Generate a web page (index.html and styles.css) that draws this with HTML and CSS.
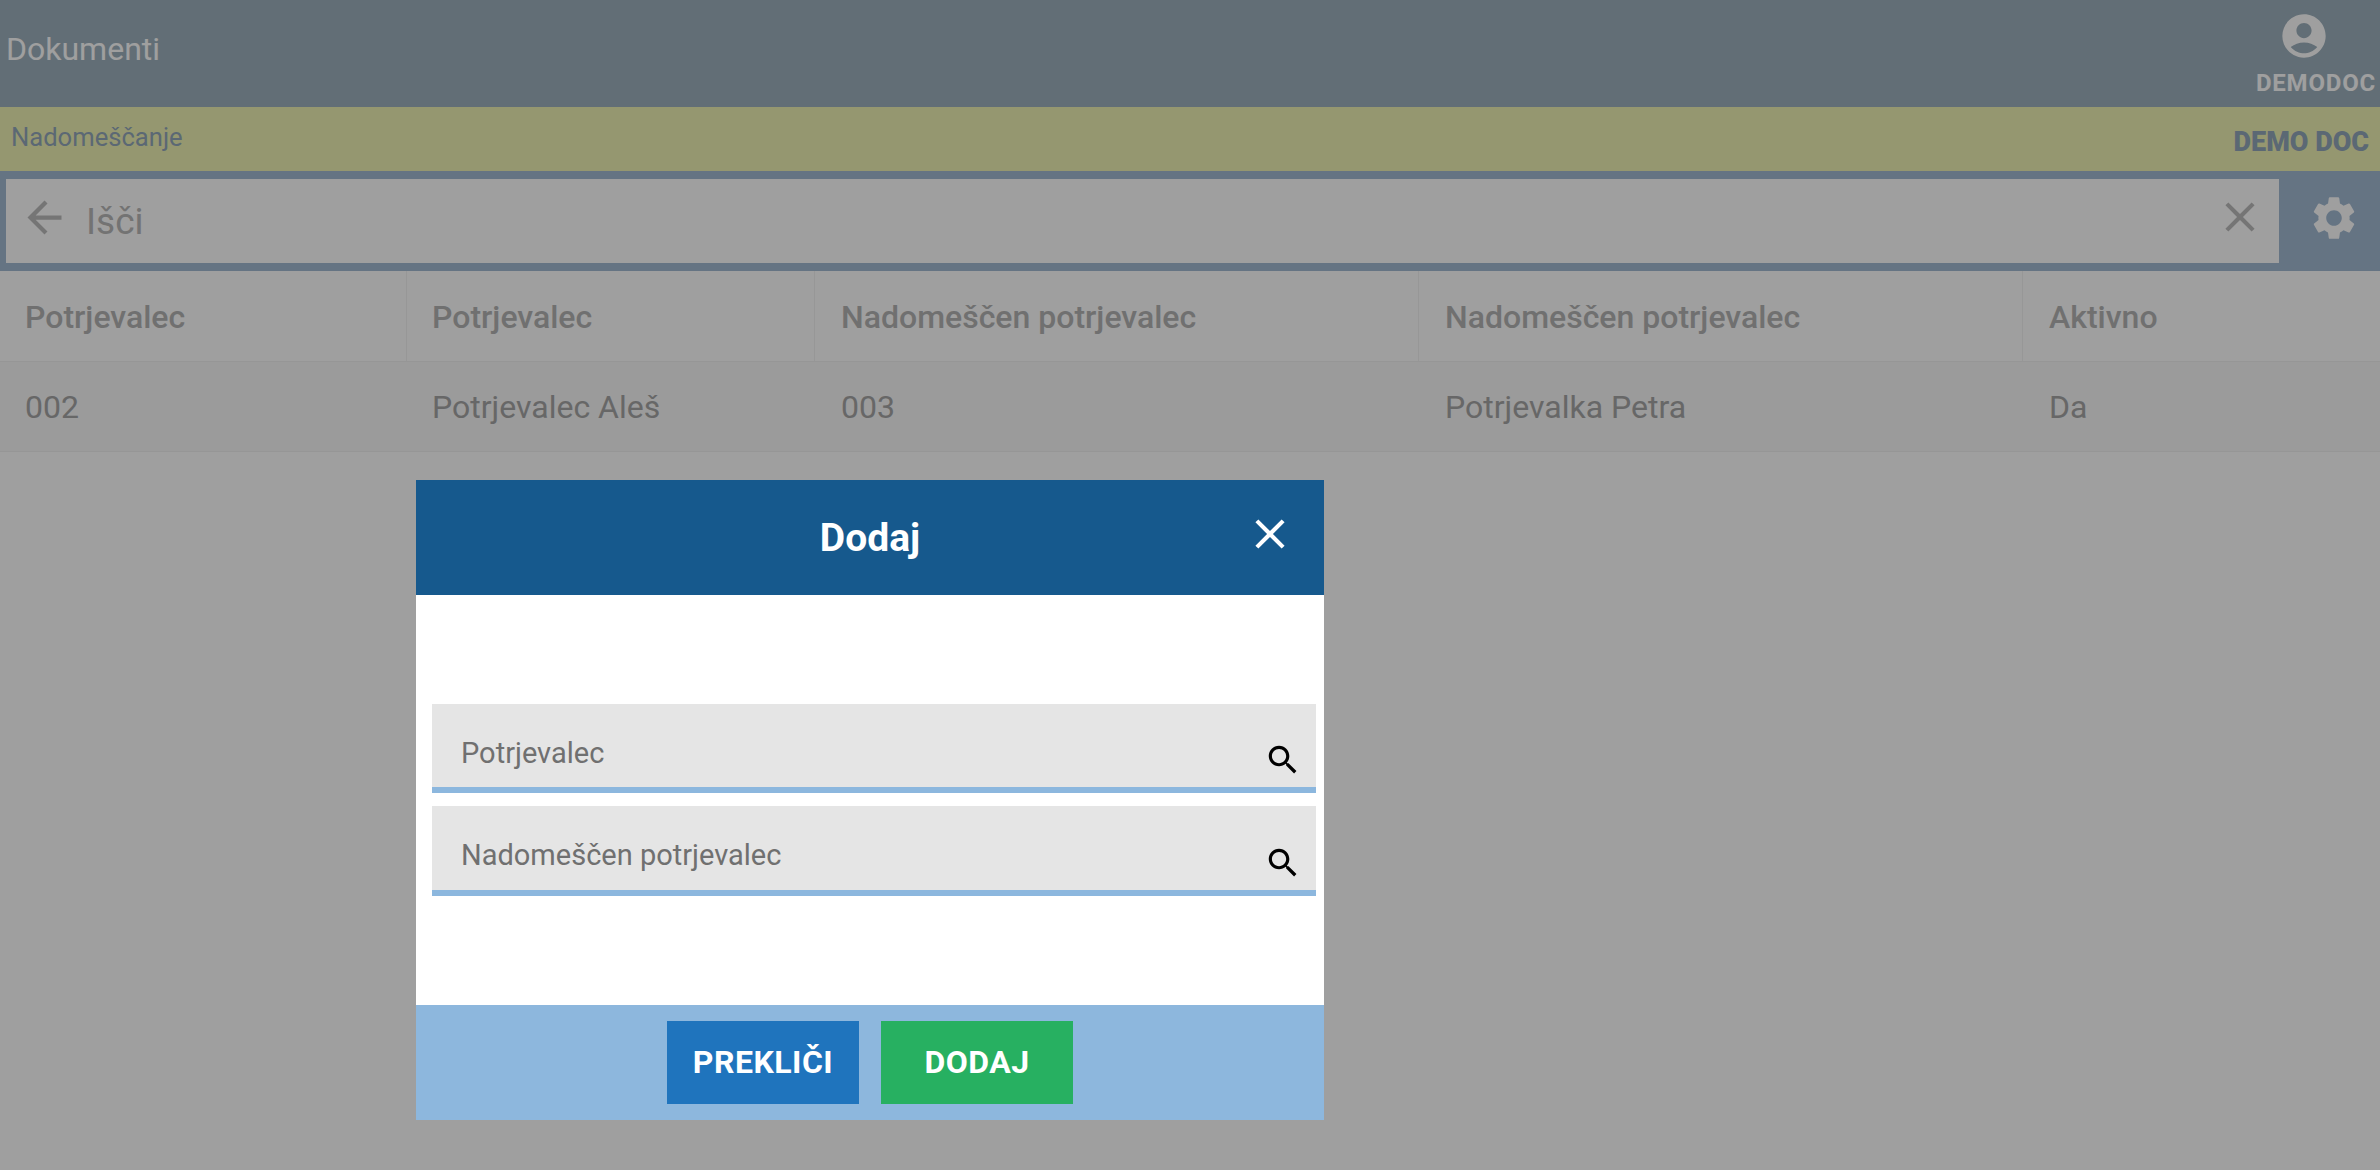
FILE: index.html
```html
<!DOCTYPE html>
<html lang="sl">
<head>
<meta charset="utf-8">
<title>Dokumenti</title>
<link rel="stylesheet" href="styles.css">
</head>
<body>
<div class="page">
  <header class="topbar">
    <span class="topbar-title">Dokumenti</span>
    <div class="user">
      <svg class="user-icon" viewBox="0 0 24 24"><path d="M12 2C6.48 2 2 6.48 2 12s4.48 10 10 10 10-4.48 10-10S17.52 2 12 2zm0 4c1.93 0 3.5 1.57 3.5 3.5S13.93 13 12 13s-3.5-1.57-3.5-3.5S10.07 6 12 6zm0 14c-2.03 0-4.43-.82-6.14-2.88C7.55 15.8 9.68 15 12 15s4.45.8 6.14 2.12C16.43 19.18 14.03 20 12 20z"/></svg>
      <span class="user-name">DEMODOC</span>
    </div>
  </header>
  <div class="subbar">
    <span class="subbar-title">Nadomeščanje</span>
    <span class="subbar-user">DEMO DOC</span>
  </div>
  <div class="searchband">
    <div class="searchbox">
      <svg class="search-back" viewBox="0 0 24 24"><path d="M20 11H7.83l5.59-5.59L12 4l-8 8 8 8 1.41-1.41L7.83 13H20v-2z"/></svg>
      <span class="search-text">Išči</span>
      <svg class="search-clear" viewBox="0 0 24 24"><path d="M19 6.41 17.59 5 12 10.59 6.41 5 5 6.41 10.59 12 5 17.59 6.41 19 12 13.41 17.59 19 19 17.59 13.41 12z"/></svg>
    </div>
    <div class="settings">
      <svg class="settings-icon" viewBox="0 0 24 24"><path d="M19.14 12.94c.04-.3.06-.61.06-.94 0-.32-.02-.64-.07-.94l2.03-1.58c.18-.14.23-.41.12-.61l-1.92-3.32c-.12-.22-.37-.29-.59-.22l-2.39.96c-.5-.38-1.03-.7-1.62-.94l-.36-2.54c-.04-.24-.24-.41-.48-.41h-3.84c-.24 0-.43.17-.47.41l-.36 2.54c-.59.24-1.13.57-1.62.94l-2.39-.96c-.22-.08-.47 0-.59.22L2.74 8.87c-.12.21-.08.47.12.61l2.03 1.58c-.05.3-.09.63-.09.94s.02.64.07.94l-2.03 1.58c-.18.14-.23.41-.12.61l1.92 3.32c.12.22.37.29.59.22l2.39-.96c.5.38 1.03.7 1.62.94l.36 2.54c.05.24.24.41.48.41h3.84c.24 0 .44-.17.47-.41l.36-2.54c.59-.24 1.13-.56 1.62-.94l2.39.96c.22.08.47 0 .59-.22l1.92-3.32c.12-.22.07-.47-.12-.61l-2.01-1.58zM12 15.6c-1.98 0-3.6-1.62-3.6-3.6s1.62-3.6 3.6-3.6 3.6 1.62 3.6 3.6-1.62 3.6-3.6 3.6z"/></svg>
    </div>
  </div>
  <div class="table">
    <div class="row row-head">
      <div class="cell">Potrjevalec</div>
      <div class="cell">Potrjevalec</div>
      <div class="cell">Nadomeščen potrjevalec</div>
      <div class="cell">Nadomeščen potrjevalec</div>
      <div class="cell">Aktivno</div>
    </div>
    <div class="row row-body">
      <div class="cell">002</div>
      <div class="cell">Potrjevalec Aleš</div>
      <div class="cell">003</div>
      <div class="cell">Potrjevalka Petra</div>
      <div class="cell">Da</div>
    </div>
  </div>
</div>
<div class="overlay"></div>
<div class="dialog">
  <div class="dialog-head">
    <span class="dialog-title">Dodaj</span>
    <svg class="dialog-close" viewBox="0 0 24 24"><path d="M19 6.41 17.59 5 12 10.59 6.41 5 5 6.41 10.59 12 5 17.59 6.41 19 12 13.41 17.59 19 19 17.59 13.41 12z"/></svg>
  </div>
  <div class="dialog-body">
    <div class="field">
      <span class="field-label">Potrjevalec</span>
      <svg class="field-icon" viewBox="0 0 24 24"><path d="M15.5 14h-.79l-.28-.27C15.41 12.59 16 11.11 16 9.5 16 5.91 13.09 3 9.5 3S3 5.91 3 9.5 5.91 16 9.5 16c1.61 0 3.09-.59 4.23-1.57l.27.28v.79l5 4.99L20.49 19l-4.99-5zm-6 0C7.01 14 5 11.99 5 9.5S7.01 5 9.5 5 14 7.01 14 9.5 11.99 14 9.5 14z"/></svg>
    </div>
    <div class="field field-tall">
      <span class="field-label">Nadomeščen potrjevalec</span>
      <svg class="field-icon" viewBox="0 0 24 24"><path d="M15.5 14h-.79l-.28-.27C15.41 12.59 16 11.11 16 9.5 16 5.91 13.09 3 9.5 3S3 5.91 3 9.5 5.91 16 9.5 16c1.61 0 3.09-.59 4.23-1.57l.27.28v.79l5 4.99L20.49 19l-4.99-5zm-6 0C7.01 14 5 11.99 5 9.5S7.01 5 9.5 5 14 7.01 14 9.5 11.99 14 9.5 14z"/></svg>
    </div>
  </div>
  <div class="dialog-foot">
    <button class="btn btn-cancel">PREKLIČI</button>
    <button class="btn btn-add">DODAJ</button>
  </div>
</div>
</body>
</html>
```

FILE: styles.css
```css
* { box-sizing: border-box; }
html, body { margin: 0; height: 100%; }
body {
  background: #ffffff;
  font-family: Roboto, "Liberation Sans", sans-serif;
  overflow: hidden;
}
.page { display: flex; flex-direction: column; }

.topbar {
  height: 107px;
  background: #9eb1bd;
  display: flex;
  justify-content: space-between;
  align-items: flex-start;
  padding: 10px 4px 0 6px;
  color: #ffffff;
}
.topbar-title { font-size: 32px; line-height: 78px; }
.user { display: flex; flex-direction: column; align-items: flex-start; }
.user-icon { width: 52px; height: 52px; fill: #ffffff; margin-left: 22px; }
.user-name { font-size: 24px; font-weight: 700; letter-spacing: .8px; line-height: 30px; margin-top: 6px; }

.subbar {
  height: 64px;
  background: #eff3b4;
  color: #93a7ba;
  display: flex;
  justify-content: space-between;
  align-items: center;
  padding: 0 11px;
}
.subbar-title { font-size: 25.6px; padding-bottom: 4px; }
.subbar-user { font-size: 27px; font-weight: 900; padding-top: 6px; }

.searchband {
  height: 100px;
  background: #a3bbd3;
  display: flex;
  align-items: stretch;
  padding: 8px 0 8px 6px;
}
.searchbox {
  width: 2273px;
  background: #ffffff;
  display: flex;
  align-items: center;
  padding-left: 13px;
}
.search-back { width: 51px; height: 51px; fill: #bcbcbc; margin-bottom: 8px; }
.search-text { font-size: 37px; color: #b8b8b8; margin-left: 16px; flex: 1; }
.search-clear { width: 50px; height: 50px; fill: #bcbcbc; margin-right: 14px; margin-bottom: 8px; }
.settings { flex: 1; display: flex; align-items: center; justify-content: center; }
.settings-icon { width: 52px; height: 52px; fill: #ffffff; margin-left: 8px; margin-bottom: 6px; }

.table { font-size: 32px; }
.row {
  display: grid;
  grid-template-columns: 407px 408px 604px 604px 357px;
  height: 91px;
  align-items: stretch;
}
.cell {
  padding-left: 25px;
  display: flex;
  align-items: center;
}
.cell:nth-child(n+3) { padding-left: 26px; }
.row-head { font-weight: 500; border-bottom: 1px solid #f0f0f0; }
.row-head .cell { color: #b4b4b4; border-right: 1px solid #f2f2f2; padding-top: 2px; }
.row-head .cell:last-child { border-right: 0; }
.row-body { height: 90px; background: #f8f8f8; border-bottom: 1px solid #f0f0f0; }
.row-body .cell { color: #a6a6a6; }

.overlay {
  position: fixed;
  inset: 0;
  background: rgba(0, 0, 0, .375);
}

.dialog {
  position: absolute;
  left: 416px;
  top: 480px;
  width: 908px;
  height: 640px;
  background: #ffffff;
  display: flex;
  flex-direction: column;
}
.dialog-head {
  height: 115px;
  background: #16598d;
  color: #ffffff;
  display: flex;
  align-items: center;
  justify-content: center;
  position: relative;
}
.dialog-title { font-size: 39px; font-weight: 700; }
.dialog-close {
  position: absolute;
  right: 29px;
  top: 29px;
  width: 50px;
  height: 50px;
  fill: #ffffff;
}
.dialog-body {
  flex: 1;
  padding: 109px 8px 0 16px;
  display: flex;
  flex-direction: column;
  gap: 13px;
}
.field {
  height: 89px;
  background: #e5e5e5;
  border-bottom: 6px solid #8cb7de;
  position: relative;
  padding: 32px 0 0 29px;
}
.field-tall { height: 90px; }
.field-label { font-size: 29px; color: #707070; line-height: 34px; display: block; }
.field-icon {
  position: absolute;
  right: 14px;
  top: 37px;
  width: 38px;
  height: 38px;
  fill: #000000;
}
.field-tall .field-icon { top: 38px; }
.dialog-foot {
  height: 115px;
  background: #8db7dd;
  display: flex;
  justify-content: center;
  align-items: flex-start;
  gap: 22px;
  padding-top: 16px;
}
.btn {
  width: 192px;
  height: 83px;
  border: 0;
  color: #ffffff;
  font: 700 32px Roboto, "Liberation Sans", sans-serif;
  letter-spacing: .5px;
  padding: 0 0 2px;
}
.btn-cancel { background: #1f74bd; }
.btn-add { background: #27b061; }
```
